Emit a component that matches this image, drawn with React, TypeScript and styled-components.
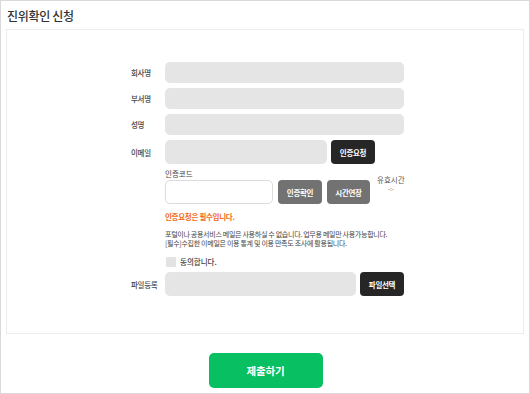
import React from 'react';
import styled, { createGlobalStyle } from 'styled-components';

const GlobalStyle = createGlobalStyle`
    html, body {
        margin: 0;
        padding: 0;
        background: #fff;
    }
    * {
        box-sizing: border-box;
    }
    body {
        font-family: 'Noto Sans CJK KR', 'Noto Sans', sans-serif;
        color: #333;
    }
`;

const Page = styled.div`
    width: 530px;
    height: 394px;
    border: 1px solid #d9d9d9;
    display: flex;
    flex-direction: column;
    overflow: hidden;
`;

const PageTitle = styled.h1`
    margin: 0;
    padding: 6px 0 0 6px;
    height: 28px;
    font-size: 12px;
    font-weight: 500;
    color: #333;
    letter-spacing: -0.3px;
`;

const Card = styled.div`
    margin: 0 5px;
    height: 305px;
    border: 1px solid #ececec;
    padding: 32px 0 0 124px;
`;

const Form = styled.div`
    display: grid;
    grid-template-columns: 34px 239px;
    row-gap: 5px;
    align-items: center;
`;

const Label = styled.div`
    font-size: 7.5px;
    font-weight: 500;
    color: #444;
    letter-spacing: -0.3px;
`;

interface InputProps {
    width?: number;
    h?: number;
    white?: boolean;
}

const Input = styled.div<InputProps>`
    width: ${(p) => (p.width ? `${p.width}px` : '100%')};
    height: ${(p) => p.h ?? 21}px;
    border-radius: 5px;
    background: ${(p) => (p.white ? '#fff' : '#e5e5e5')};
    border: ${(p) => (p.white ? '1px solid #dcdcdc' : 'none')};
    flex-shrink: 0;
`;

const FieldRow = styled.div<{ gap?: number }>`
    display: flex;
    align-items: center;
    gap: ${(p) => p.gap ?? 4}px;
`;

const Button = styled.div<{ tone?: 'dark' | 'grey'; width: number }>`
    width: ${(p) => p.width}px;
    height: 24px;
    border-radius: 4px;
    background: ${(p) => (p.tone === 'grey' ? '#727272' : '#262626')};
    color: #fff;
    font-size: 7.5px;
    font-weight: 700;
    display: flex;
    align-items: center;
    justify-content: center;
    letter-spacing: -0.3px;
    flex-shrink: 0;
`;

const Extra = styled.div`
    grid-column: 2;
    display: flex;
    flex-direction: column;
`;

const SubLabel = styled.div`
    font-size: 7.5px;
    color: #444;
    margin: 0 0 1px;
    line-height: 10px;
`;

const Timer = styled.div`
    margin: -6px 0 0 2px;
    display: flex;
    flex-direction: column;
    align-items: center;
    align-self: flex-start;
    white-space: nowrap;
    font-size: 7.5px;
    color: #555;
    line-height: 11px;
`;

const TimerValue = styled.span`
    font-size: 6px;
    line-height: 8px;
`;

const ErrorText = styled.div`
    margin-top: 8px;
    font-size: 7.5px;
    font-weight: 700;
    color: #f26a22;
    line-height: 10px;
    letter-spacing: -0.3px;
`;

const Notice = styled.div`
    margin-top: 8px;
    font-size: 7px;
    color: #444;
    line-height: 9px;
    letter-spacing: -0.3px;
    white-space: nowrap;
`;

const Agree = styled.label`
    margin: 8px 0 0;
    display: flex;
    align-items: center;
    gap: 4px;
    font-size: 7.5px;
    color: #444;
    font-weight: 500;
`;

const Check = styled.span`
    width: 10px;
    height: 10px;
    background: #e3e3e3;
    border-radius: 1px;
    margin-left: 1px;
`;

const Footer = styled.div`
    display: flex;
    justify-content: center;
    padding: 19px 0 0 1px;
`;

const Submit = styled.button`
    width: 114px;
    height: 35px;
    border: none;
    border-radius: 5px;
    background: #08bf62;
    color: #fff;
    font-family: inherit;
    font-size: 10.5px;
    font-weight: 700;
    letter-spacing: -0.2px;
`;

export default function App() {
    return (
        <>
            <GlobalStyle />
            <Page>
                <PageTitle>진위확인 신청</PageTitle>
                <Card>
                    <Form>
                        <Label>회사명</Label>
                        <Input />
                        <Label>부서명</Label>
                        <Input />
                        <Label>성명</Label>
                        <Input />
                        <Label>이메일</Label>
                        <FieldRow>
                            <Input width={162} h={24} />
                            <Button width={44}>인증요청</Button>
                        </FieldRow>
                        <Extra>
                            <SubLabel>인증코드</SubLabel>
                            <FieldRow gap={5}>
                                <Input width={108} h={24} white />
                                <Button tone="grey" width={44}>
                                    인증확인
                                </Button>
                                <Button tone="grey" width={43}>
                                    시간연장
                                </Button>
                                <Timer>
                                    <span>유효시간</span>
                                    <TimerValue>-:-</TimerValue>
                                </Timer>
                            </FieldRow>
                            <ErrorText>인증요청은 필수입니다.</ErrorText>
                            <Notice>
                                포털이나 공용서비스 메일은 사용하실 수 없습니다. 업무용 메일만 사용가능합니다.
                                <br />
                                [필수]수집한 이메일은 이용 통계 및 이용 만족도 조사에 활용됩니다.
                            </Notice>
                            <Agree>
                                <Check />
                                동의합니다.
                            </Agree>
                        </Extra>
                        <Label>파일등록</Label>
                        <FieldRow>
                            <Input width={191} h={24} />
                            <Button width={44}>파일선택</Button>
                        </FieldRow>
                    </Form>
                </Card>
                <Footer>
                    <Submit>제출하기</Submit>
                </Footer>
            </Page>
        </>
    );
}
